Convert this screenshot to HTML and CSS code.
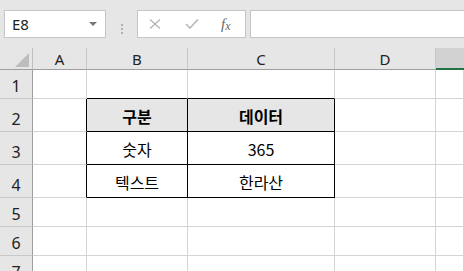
FILE: index.html
```html
<!DOCTYPE html>
<html lang="ko">
<head>
    <meta charset="utf-8">
    <title>Sheet1</title>
    <link rel="stylesheet" href="styles.css">
</head>
<body>
    <div class="toolbar">
        <div class="name-box">
            <span>E8</span>
            <span class="drop"></span>
        </div>
        <div class="grip">
            <i></i><i></i><i></i>
        </div>
        <div class="fx-box">
            <svg class="ico" width="14" height="10" viewBox="0 0 14 10">
                <path d="M2 0.5 L12 9.5 M12 0.5 L2 9.5" stroke="#b4b4b4" stroke-width="1.3" fill="none"/>
            </svg>
            <svg class="ico" width="14" height="10" viewBox="0 0 14 10">
                <path d="M1 5 L5 9 L13 0.5" stroke="#b4b4b4" stroke-width="1.5" fill="none"/>
            </svg>
            <span class="fx">f<sub>x</sub></span>
        </div>
        <div class="formula"></div>
    </div>

    <div class="sheet">
        <div class="hd corner"><span class="tri"></span></div>
        <div class="hd col">A</div>
        <div class="hd col">B</div>
        <div class="hd col">C</div>
        <div class="hd col">D</div>
        <div class="hd col sel"></div>

        <div class="hd row">1</div>
        <div class="cell"></div>
        <div class="cell bb"></div>
        <div class="cell bb"></div>
        <div class="cell"></div>
        <div class="cell"></div>

        <div class="hd row">2</div>
        <div class="cell br"></div>
        <div class="cell br bb th">구분</div>
        <div class="cell br bb th">데이터</div>
        <div class="cell"></div>
        <div class="cell"></div>

        <div class="hd row">3</div>
        <div class="cell br"></div>
        <div class="cell br bb">숫자</div>
        <div class="cell br bb">365</div>
        <div class="cell"></div>
        <div class="cell"></div>

        <div class="hd row">4</div>
        <div class="cell br"></div>
        <div class="cell br bb">텍스트</div>
        <div class="cell br bb">한라산</div>
        <div class="cell"></div>
        <div class="cell"></div>

        <div class="hd row">5</div>
        <div class="cell"></div>
        <div class="cell"></div>
        <div class="cell"></div>
        <div class="cell"></div>
        <div class="cell"></div>

        <div class="hd row">6</div>
        <div class="cell"></div>
        <div class="cell"></div>
        <div class="cell"></div>
        <div class="cell"></div>
        <div class="cell"></div>

        <div class="hd row">7</div>
        <div class="cell"></div>
        <div class="cell"></div>
        <div class="cell"></div>
        <div class="cell"></div>
        <div class="cell"></div>
    </div>
</body>
</html>
```

FILE: styles.css
```css
body{
    margin:0;
    width:464px;
    height:271px;
    overflow:hidden;
    background:#e6e6e6;
    font-family:"Noto Sans","Noto Sans CJK KR",sans-serif;
}

.toolbar{
    display:flex;
    padding-top:10px;
    box-sizing:border-box;
    height:48px;
}
.name-box, .fx-box, .formula{
    height:28px;
    box-sizing:border-box;
    background:#fff;
    border:1px solid #c6c6c6;
}
.name-box{
    margin-left:4px;
    width:102px;
    display:flex;
    align-items:center;
    justify-content:space-between;
    padding:0 8px 0 7px;
    font-size:15px;
    color:#222;
}
.drop{
    width:0;
    height:0;
    border-left:4px solid transparent;
    border-right:4px solid transparent;
    border-top:4px solid #777;
}
.grip{
    width:31px;
    display:flex;
    flex-direction:column;
    align-items:center;
    justify-content:center;
    gap:2px;
}
.grip i{
    display:block;
    width:2px;
    height:2px;
    background:#b0b0b0;
}
.fx-box{
    width:109px;
    display:flex;
    align-items:center;
    padding-left:10px;
    gap:23px;
}
.fx{
    font-family:"Liberation Serif",serif;
    font-style:italic;
    font-size:15px;
    color:#666;
    margin-left:-1px;
}
.fx sub{
    font-size:12px;
    vertical-align:0;
    position:relative;
    top:1px;
}
.formula{
    margin-left:4px;
    flex:1;
    border-right:none;
}

.sheet{
    display:grid;
    grid-template-columns:33px 54px 101px 147px 101px 1fr;
    grid-template-rows:22px 29px 33px 33px 33px 29px 29px 29px;
    background:#fff;
}
.hd{
    background:#e6e6e6;
    box-sizing:border-box;
    display:flex;
    justify-content:center;
    color:#222;
}
.corner{
    border-right:1px solid #c0c0c0;
    border-bottom:1px solid #9e9e9e;
    position:relative;
}
.tri{
    position:absolute;
    right:3px;
    bottom:2px;
    width:0;
    height:0;
    border-left:14px solid transparent;
    border-bottom:14px solid #bdbdbd;
}
.col{
    align-items:center;
    font-size:15px;
    border-right:1px solid #c8c8c8;
    border-bottom:1px solid #9e9e9e;
    padding-top:1px;
}
.col.sel{
    background:#d2d2d2;
    border-right:none;
    border-bottom:2px solid #217346;
}
.row{
    align-items:flex-end;
    font-size:16px;
    border-right:1px solid #9e9e9e;
    border-bottom:1px solid #c8c8c8;
    padding-bottom:1px;
}
.cell{
    box-sizing:border-box;
    border-right:1px solid #d4d4d4;
    border-bottom:1px solid #d4d4d4;
    display:flex;
    align-items:flex-end;
    justify-content:center;
    padding-bottom:3px;
    font-family:"Noto Sans CJK KR",sans-serif;
    font-size:16px;
    color:#000;
}
.cell.br{
    border-right-color:#000;
}
.cell.bb{
    border-bottom-color:#000;
}
.cell.th{
    background:#e7e6e6;
    font-weight:bold;
}
```
